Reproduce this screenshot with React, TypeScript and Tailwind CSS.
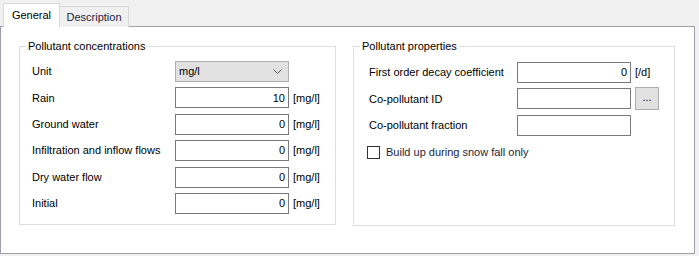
import { ReactNode } from 'react';

const font = { fontFamily: '"Liberation Sans", Arial, sans-serif' };

function GroupBox({ title, className, children }: { title: string; className: string; children: ReactNode }) {
  return (
    <div className={`relative border border-[#dcdcdc] ${className}`}>
      <span className="absolute -top-[8px] left-[6px] bg-white px-[2px] leading-[14px] text-black">{title}</span>
      {children}
    </div>
  );
}

function NumberBox({ value, width = 'w-[114px]' }: { value: string; width?: string }) {
  return (
    <div className={`h-[21px] ${width} border border-[#7a7a7a] bg-white flex items-center justify-end pr-[3px] text-black`}>
      {value}
    </div>
  );
}

const concentrationRows = [
  { label: 'Rain', value: '10' },
  { label: 'Ground water', value: '0' },
  { label: 'Infiltration and inflow flows', value: '0' },
  { label: 'Dry water flow', value: '0' },
  { label: 'Initial', value: '0' },
];

export default function App() {
  return (
    <div className="w-[699px] h-[256px] bg-[#f0f0f0] text-[11px] text-black" style={font}>
      <div className="flex items-end pl-[3px] pt-[3px] h-[27px] relative z-10">
        <div className="h-[24px] w-[57px] bg-white border border-b-0 border-[#d9d9d9] flex items-center justify-center">
          General
        </div>
        <div className="h-[21px] w-[69px] bg-[#f0f0f0] border border-b-0 border-l-0 border-[#d9d9d9] flex items-center justify-center text-[#1e1e3c]">
          Description
        </div>
      </div>
      <div className="-mt-px h-[228px] w-[695px] bg-white border border-[#a0a0ac] pl-[18px] pt-[19px] flex gap-[17px]">
        <GroupBox title="Pollutant concentrations" className="w-[317px] h-[179px]">
          <div className="pl-[12px] pt-[14px] flex flex-col gap-[5.4px]">
            <div className="h-[21px] flex items-center">
              <span className="w-[143px]">Unit</span>
              <div className="h-[21px] w-[114px] bg-[#e1e1e1] border border-[#adadad] flex items-center justify-between pl-[3px] pr-[6px]">
                <span>mg/l</span>
                <svg width="9" height="5" viewBox="0 0 9 5" fill="none" stroke="#606060" strokeWidth="1">
                  <path d="M0.5 0.5 L4.5 4.5 L8.5 0.5" />
                </svg>
              </div>
            </div>
            {concentrationRows.map((r) => (
              <div key={r.label} className="h-[21px] flex items-center">
                <span className="w-[143px]">{r.label}</span>
                <NumberBox value={r.value} />
                <span className="ml-[4px]">[mg/l]</span>
              </div>
            ))}
          </div>
        </GroupBox>
        <GroupBox title="Pollutant properties" className="w-[322px] h-[180px]">
          <div className="pl-[15px] pt-[15px] flex flex-col gap-[5.4px]">
            <div className="h-[21px] flex items-center">
              <span className="w-[148px]">First order decay coefficient</span>
              <NumberBox value="0" />
              <span className="ml-[4px]">[/d]</span>
            </div>
            <div className="h-[21px] flex items-center">
              <span className="w-[148px]">Co-pollutant ID</span>
              <NumberBox value="" />
              <div className="ml-[4px] h-[23px] w-[24px] bg-[#e1e1e1] border border-[#adadad] flex items-center justify-center leading-none pb-[2px]">
                ...
              </div>
            </div>
            <div className="h-[21px] flex items-center">
              <span className="w-[148px]">Co-pollutant fraction</span>
              <NumberBox value="" />
            </div>
            <div className="h-[21px] mt-[1px] flex items-center -ml-[2px]">
              <div className="h-[13px] w-[13px] border border-[#333333] bg-white" />
              <span className="ml-[6px] text-[#1e1e3c]">Build up during snow fall only</span>
            </div>
          </div>
        </GroupBox>
      </div>
    </div>
  );
}
